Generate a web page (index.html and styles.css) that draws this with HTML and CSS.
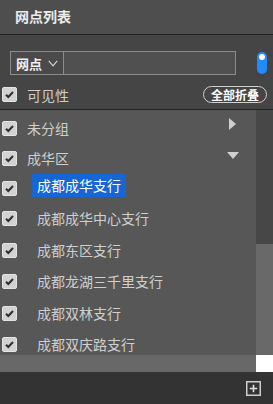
FILE: index.html
```html
<!DOCTYPE html>
<html lang="zh">
<head>
<meta charset="utf-8">
<link rel="stylesheet" href="styles.css">
</head>
<body>
<div class="panel">
  <div class="header"><span class="title">网点列表</span></div>
  <div class="toolbar">
    <div class="search-row">
      <div class="search">
        <div class="select"><span class="select-text">网点</span>
          <svg class="chev" width="10" height="7" viewBox="0 0 10 7"><path d="M0.8 0.8 L5 5.8 L9.2 0.8" fill="none" stroke="#d8d8d8" stroke-width="1.1"/></svg>
        </div>
        <div class="input"></div>
      </div>
      <div class="toggle"><span class="knob"></span></div>
    </div>
    <div class="vis-row">
      <span class="cb"><svg width="15" height="15" viewBox="0 0 15 15"><path d="M4 7.8 L6.3 10 L11 5" fill="none" stroke="#2e2e2e" stroke-width="2"/></svg></span>
      <span class="vis-label">可见性</span>
      <span class="collapse-btn">全部折叠</span>
    </div>
  </div>
  <div class="list-area">
    <div class="list">
      <div class="row group">
        <span class="cb"><svg width="15" height="15" viewBox="0 0 15 15"><path d="M4 7.8 L6.3 10 L11 5" fill="none" stroke="#2e2e2e" stroke-width="2"/></svg></span>
        <span class="group-label">未分组</span>
        <svg class="tri tri-right" width="8" height="12" viewBox="0 0 8 12"><path d="M0 0 L7 6 L0 12 Z" fill="#cfcfcf"/></svg>
      </div>
      <div class="row group">
        <span class="cb"><svg width="15" height="15" viewBox="0 0 15 15"><path d="M4 7.8 L6.3 10 L11 5" fill="none" stroke="#2e2e2e" stroke-width="2"/></svg></span>
        <span class="group-label">成华区</span>
        <svg class="tri tri-down" width="12" height="8" viewBox="0 0 12 8"><path d="M0 0 L12 0 L6 7 Z" fill="#cfcfcf"/></svg>
      </div>
      <div class="row item first">
        <span class="cb"><svg width="15" height="15" viewBox="0 0 15 15"><path d="M4 7.8 L6.3 10 L11 5" fill="none" stroke="#2e2e2e" stroke-width="2"/></svg></span>
        <span class="item-label selected">成都成华支行</span>
      </div>
      <div class="row item">
        <span class="cb"><svg width="15" height="15" viewBox="0 0 15 15"><path d="M4 7.8 L6.3 10 L11 5" fill="none" stroke="#2e2e2e" stroke-width="2"/></svg></span>
        <span class="item-label">成都成华中心支行</span>
      </div>
      <div class="row item">
        <span class="cb"><svg width="15" height="15" viewBox="0 0 15 15"><path d="M4 7.8 L6.3 10 L11 5" fill="none" stroke="#2e2e2e" stroke-width="2"/></svg></span>
        <span class="item-label">成都东区支行</span>
      </div>
      <div class="row item">
        <span class="cb"><svg width="15" height="15" viewBox="0 0 15 15"><path d="M4 7.8 L6.3 10 L11 5" fill="none" stroke="#2e2e2e" stroke-width="2"/></svg></span>
        <span class="item-label">成都龙湖三千里支行</span>
      </div>
      <div class="row item">
        <span class="cb"><svg width="15" height="15" viewBox="0 0 15 15"><path d="M4 7.8 L6.3 10 L11 5" fill="none" stroke="#2e2e2e" stroke-width="2"/></svg></span>
        <span class="item-label">成都双林支行</span>
      </div>
      <div class="row item">
        <span class="cb"><svg width="15" height="15" viewBox="0 0 15 15"><path d="M4 7.8 L6.3 10 L11 5" fill="none" stroke="#2e2e2e" stroke-width="2"/></svg></span>
        <span class="item-label">成都双庆路支行</span>
      </div>
    </div>
    <div class="vscroll"><div class="vtrack"></div><div class="vthumb"></div></div>
  </div>
  <div class="hscroll"><div class="hbar"></div><div class="corner"></div></div>
  <div class="footer">
    <svg class="add" width="15" height="15" viewBox="0 0 15 15"><rect x="0.75" y="0.75" width="13.5" height="13.5" fill="none" stroke="#cfcfcf" stroke-width="1.5"/><path d="M7.5 3.8 V11.2 M3.8 7.5 H11.2" stroke="#e0e0e0" stroke-width="1.6"/></svg>
  </div>
</div>
</body>
</html>
```
FILE: styles.css
```css
* { box-sizing: border-box; }
html, body { margin: 0; padding: 0; background: #333333; }
body {
  font-family: "Noto Sans CJK SC", "Noto Sans", "Liberation Sans", sans-serif;
  width: 273px;
  height: 404px;
  overflow: hidden;
}
.panel { display: flex; flex-direction: column; width: 273px; height: 404px; }

.header {
  height: 35px;
  background: #4e4e4e;
  border-bottom: 1px solid #1e1e1e;
  display: flex;
  align-items: center;
  padding-left: 15px;
}
.title { color: #ececec; font-size: 14px; font-weight: bold; line-height: 1; margin-top: -2px; }

.toolbar {
  height: 75px;
  background: #454545;
  border-bottom: 1px solid #242424;
  padding: 16px 6px 0 2px;
  display: flex;
  flex-direction: column;
}
.search-row { display: flex; align-items: center; height: 24px; }
.search {
  margin-left: 8px;
  width: 227px;
  height: 24px;
  border: 1px solid #8c8c8c;
  display: flex;
}
.select {
  width: 53px;
  border-right: 1px solid #8c8c8c;
  display: flex;
  align-items: center;
  padding-left: 5px;
  gap: 6px;
  background: #4a4a4a;
}
.select-text { color: #f0f0f0; font-size: 13px; font-weight: bold; line-height: 1; }
.chev { margin-top: 1px; }
.input { flex: 1; background: #505050; }
.toggle {
  margin-left: 21px;
  width: 10px;
  height: 22px;
  border-radius: 5px;
  background: #1e8cff;
  position: relative;
}
.knob {
  position: absolute;
  left: 2px;
  top: 2px;
  width: 6px;
  height: 6px;
  border-radius: 50%;
  background: #ffffff;
}
.vis-row { display: flex; align-items: center; height: 17px; margin-top: 11px; }
.cb {
  width: 15px;
  height: 15px;
  background: #d2d2d2;
  border: 1px solid #e4e4e4;
  border-radius: 2px;
  display: flex;
  align-items: center;
  justify-content: center;
  flex: none;
}
.cb svg { display: block; margin: -1px; }
.vis-label { margin-left: 10px; color: #cdcdcd; font-size: 14px; line-height: 1; }
.collapse-btn {
  margin-left: auto;
  width: 64px;
  height: 17px;
  border: 1px solid #d0d0d0;
  border-radius: 9px;
  color: #ffffff;
  font-size: 12px;
  font-weight: bold;
  line-height: 15px;
  text-align: center;
}

.list-area { display: flex; height: 245px; }
.list {
  width: 256px;
  background: #575757;
  overflow: hidden;
  padding-top: 3px;
  padding-left: 2px;
}
.row { display: flex; align-items: center; position: relative; }
.row.group { height: 30px; }
.row.item { height: 31.5px; }
.row.item.first { height: 30px; }
.group-label { margin-left: 10px; color: #cfcfcf; font-size: 14px; line-height: 1; }
.item-label {
  margin-left: 15px;
  padding: 0 5px;
  color: #cfcfcf;
  font-size: 14px;
  line-height: 23px;
  height: 23px;
}
.item-label.selected { background: #1766d6; color: #ffffff; margin-top: -5px; }
.tri { position: absolute; }
.tri-right { left: 227px; top: 5px; }
.tri-down { left: 225px; top: 9px; }

.vscroll { width: 17px; display: flex; flex-direction: column; }
.vtrack { height: 134px; background: #474747; }
.vthumb { flex: 1; background: #696969; }

.hscroll { display: flex; height: 17px; }
.hbar { width: 256px; background: #686868; }
.corner { flex: 1; background: #ffffff; }

.footer {
  flex: 1;
  background: #333333;
  display: flex;
  justify-content: flex-end;
  align-items: flex-start;
  padding: 9px 12px 0 0;
}
.add { display: block; }
```
